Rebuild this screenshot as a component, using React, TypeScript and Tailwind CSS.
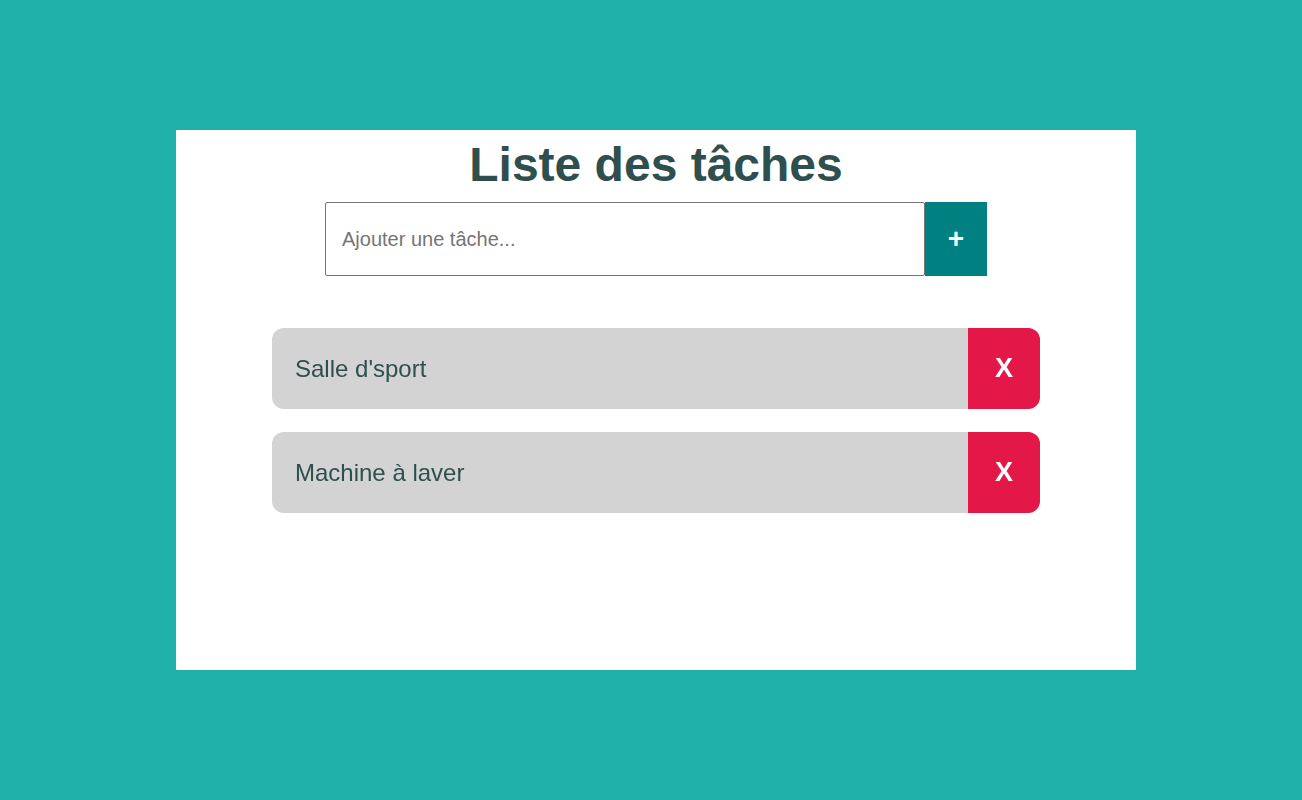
import { useState } from "react";

const font = { fontFamily: '"Liberation Sans", Arial, sans-serif' };

export default function App() {
  const [tasks, setTasks] = useState<string[]>(["Salle d'sport", "Machine à laver"]);
  const [value, setValue] = useState("");

  const addTask = () => {
    if (!value.trim()) return;
    setTasks([...tasks, value.trim()]);
    setValue("");
  };

  return (
    <div className="min-h-screen overflow-hidden bg-[#20b2aa] pt-[130px]" style={font}>
      <div className="ml-[176px] flex h-[540px] w-[960px] flex-col items-center bg-white pt-2">
        <h1 className="text-[48px] font-bold leading-[54px] text-[#2f4f4f]">Liste des tâches</h1>

        <div className="mt-[10px] flex">
          <input
            autoFocus
            className="h-[74px] w-[600px] rounded-[2px] border border-[#767676] px-4 text-[20px] text-[#2f4f4f] outline-none placeholder:text-[#757575]"
            placeholder="Ajouter une tâche..."
            value={value}
            onChange={(e) => setValue(e.target.value)}
            onKeyDown={(e) => e.key === "Enter" && addTask()}
          />
          <button className="h-[74px] w-[62px] bg-[#008080] text-[28px] font-bold text-white" onClick={addTask} type="button">+</button>
        </div>

        <ul className="mt-[52px] flex w-[768px] flex-col gap-[23px]">
          {tasks.map((task, i) => (
            <li key={i} className="flex h-[81px] items-center overflow-hidden rounded-xl bg-[#d3d3d3]">
              <span className="flex-1 pl-[23px] text-[24px] text-[#2f4f4f]">{task}</span>
              <button
                className="h-full w-[72px] bg-[#e31748] text-[27px] font-bold text-white"
                onClick={() => setTasks(tasks.filter((_, j) => j !== i))}
                type="button"
              >
                X
              </button>
            </li>
          ))}
        </ul>
      </div>
    </div>
  );
}
